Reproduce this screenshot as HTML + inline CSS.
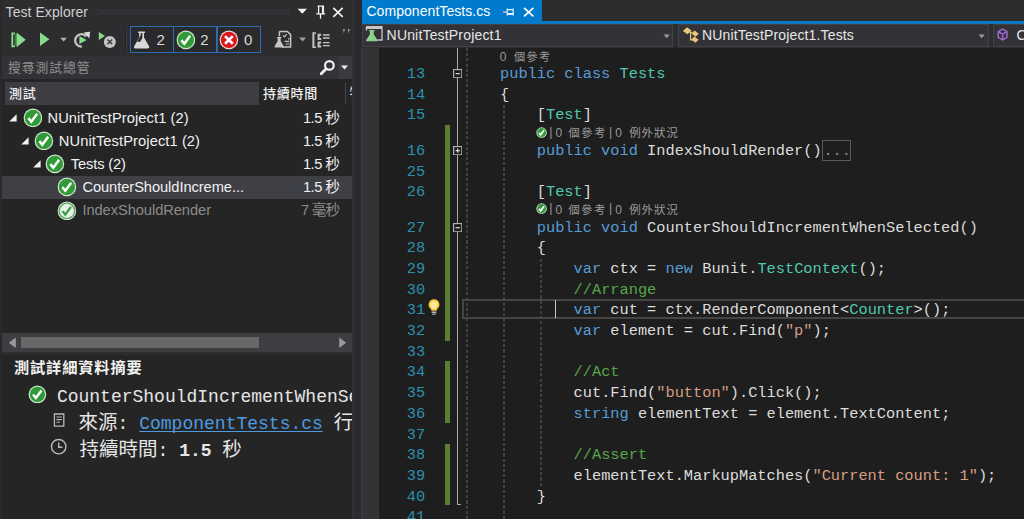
<!DOCTYPE html>
<html lang="zh-Hant"><head><meta charset="utf-8"><title>Test Explorer</title>
<style>
html,body{margin:0;padding:0}
body{width:1024px;height:519px;overflow:hidden;position:relative;background:#2d2d30;font-family:"Liberation Sans","Noto Sans CJK TC",sans-serif;}
.t{position:absolute;white-space:pre;margin:0}
.r{position:absolute;display:block}
.k{color:#569cd6} .y{color:#4ec9b0} .s{color:#d69d85} .c{color:#57a64a}
</style></head>
<body>
<div class="r" style="left:0.00px;top:0.00px;width:2.00px;height:519.00px;background:#2a2a2d;"></div>
<div class="t" id="title" style="top:2.65px;font-size:14px;line-height:19px;color:#cfcfcf;left:5.60px;letter-spacing:0.061px;">Test Explorer</div>
<svg class="r" style="left:97px;top:8.6px" width="194" height="6" viewBox="0 0 194 6"><defs><pattern id="gp" width="4" height="4" patternUnits="userSpaceOnUse"><rect x="0" y="0" width="1.3" height="1.3" fill="#46464b"/><rect x="2" y="2" width="1.3" height="1.3" fill="#46464b"/></pattern></defs><rect width="193" height="5.4" fill="url(#gp)"/></svg>
<svg class="r" style="left:296.00px;top:4.00px" width="50" height="16" viewBox="0 0 50 16"><path d="M1.6 4.8 L11 4.8 L6.3 9.8 Z" fill="#f1f1f1"/><path d="M21.6 2.2 h6.4 M22.6 2.2 v7.6 M26.6 2.2 v7.6 M27.4 2.2 v7.6 M20.2 9.8 h9 M24.5 9.8 v5" stroke="#f1f1f1" stroke-width="1.3" fill="none"/><path d="M37.3 3.8 L46.7 12.8 M46.7 3.8 L37.3 12.8" stroke="#f1f1f1" stroke-width="1.7" fill="none"/></svg>
<svg class="r" style="left:8.00px;top:28.00px" width="110" height="24" viewBox="0 0 110 24"><path d="M3.4 4.6 h3.6 v1.6 h-1.8 v11.4 h1.8 v1.6 h-3.6 Z" fill="#86dc88"/><path d="M6.6 5.2 L11 8.6 L11 15.2 L6.6 18.6 Z" fill="#4a7a4a"/><path d="M8.6 4.4 L17.8 11.8 L8.6 19.2 Z" fill="#86dc88"/><path d="M32 4.4 L41.4 11.2 L32 18 Z" fill="#86dc88"/><path d="M52.2 9.8 L59 9.8 L55.6 13.4 Z" fill="#b4b4b4"/><path d="M78.2 8.5 A6.2 6.2 0 1 0 73.9 18.6" stroke="#c5c5c5" stroke-width="2.2" fill="none"/><path d="M75.6 4.6 L82 3.8 L81.4 10.4 Z" fill="#dedede"/><path d="M71.4 8 L78.6 12 L71.4 16.1 Z" fill="#86dc88"/><path d="M90.8 4 L97 8 L90.8 12 Z" fill="#86dc88"/><circle cx="101.8" cy="13.9" r="6" fill="#c5c5c5"/><path d="M99.4 11.5 L104.2 16.3 M104.2 11.5 L99.4 16.3" stroke="#3c3c3c" stroke-width="1.5"/></svg>
<div class="r" style="left:125.30px;top:27.00px;width:1.00px;height:26.00px;background:#222224;"></div>
<div class="r" style="left:126.30px;top:27.00px;width:1.00px;height:26.00px;background:#3a3a3e;"></div>
<div class="r" style="left:130.00px;top:26.30px;width:131.00px;height:26.60px;background:#2a2a2c;box-sizing:border-box;border:1.3px solid #2c6cb5;"></div>
<div class="r" style="left:172.60px;top:26.30px;width:1.30px;height:26.60px;background:#2c6cb5;"></div>
<div class="r" style="left:216.40px;top:26.30px;width:1.30px;height:26.60px;background:#2c6cb5;"></div>
<svg class="r" style="left:132.40px;top:29.60px" width="19" height="20" viewBox="0 0 19 20"><path d="M6.2 1.4 h6.8 v1.6 h-1 v4.6 l5.2 9 q0.5 1.6 -1.2 1.8 h-12.8 q-1.7 -0.2 -1.2 -1.8 l5.2 -9 v-4.6 h-1 Z" fill="#d8d8d8"/><path d="M8.8 3 h1.6 v5 l-2.2 3.8 h-3.2 l3.8 -6.6 Z" fill="#2a2a2c"/></svg>
<div class="t" id="n1" style="top:30.00px;font-size:15px;line-height:20px;color:#d8d8d8;left:156.60px;">2</div>
<svg class="r" style="left:175.70px;top:29.80px" width="19.80" height="19.80" viewBox="-10 -10 20 20"><circle r="9.4" fill="#cfe8cf"/><circle r="8.2" fill="#2f9a37"/><path d="M-4.6 0.2 L-1.6 3.9 L4.3 -4.2" stroke="#ffffff" stroke-width="2.5" fill="none"/></svg>
<div class="t" id="n2" style="top:30.00px;font-size:15px;line-height:20px;color:#d8d8d8;left:200.20px;">2</div>
<svg class="r" style="left:218.8px;top:29.8px" width="19.8" height="19.8" viewBox="-10 -10 20 20"><circle r="9.4" fill="#f3d6d6"/><circle r="8.2" fill="#d8181c"/><path d="M-3.9 -3.9 L3.9 3.9 M3.9 -3.9 L-3.9 3.9" stroke="#fff" stroke-width="2.6"/></svg>
<div class="t" id="n3" style="top:30.00px;font-size:15px;line-height:20px;color:#d8d8d8;left:244.00px;">0</div>
<svg class="r" style="left:273.00px;top:29.00px" width="80" height="22" viewBox="0 0 80 22"><path d="M6.4 2.4 h8 l3.2 3.2 v12.4 h-8.6" stroke="#c5c5c5" stroke-width="1.5" fill="none"/><path d="M6.4 2.4 v5" stroke="#c5c5c5" stroke-width="1.5"/><path d="M10 6.4 l1.4 1.4 l2.4 -2.6 M15 9.8 h1.6 M11.6 12.4 h4.6 M12.6 15 h3.6" stroke="#c5c5c5" stroke-width="1.2" fill="none"/><path d="M4 8 h4.4 v1 h-0.7 v3 l3.2 5.4 q0.2 0.9 -0.7 1 h-8 q-0.9 -0.1 -0.7 -1 l3.2 -5.4 v-3 h-0.7 Z" fill="#c5c5c5"/><path d="M26 8.6 L33.2 8.6 L29.6 12.4 Z" fill="#9a9a9a"/><path d="M39.4 3.2 h3.6 v1.6 h-1.6 v12.6 h1.6 v1.6 h-3.6 Z" fill="#c5c5c5"/><path d="M44.6 4.8 h3.6 v2 h-1.6 v2.2 h1.6 v2 h-3.6 Z M44.6 12.4 h3.6 v2 h-1.6 v2.2 h1.6 v2 h-3.6 Z" fill="#c5c5c5"/><path d="M50 6 h6.6 M50 9 h6.6 M50 13.6 h6.6 M50 16.6 h6.6" stroke="#c5c5c5" stroke-width="1.4"/><path d="M69.8 0 l2.2 0 l-1.1 4.4 Z M74.6 0 l2.2 0 l-1.1 4.4 Z" fill="#9a9a9a"/></svg>
<div class="r" style="left:2.00px;top:56.20px;width:350.50px;height:22.50px;background:#333337;"></div>
<div class="r" style="left:2.00px;top:78.70px;width:350.50px;height:3.40px;background:#252526;"></div>
<div class="r" style="left:338.00px;top:56.20px;width:14.50px;height:22.50px;background:#3a3a3f;"></div>
<div class="t" id="search" style="top:59.06px;font-size:12.8px;line-height:17px;color:#8f8f8f;left:8.00px;letter-spacing:0.953px;">搜尋測試總管</div>
<svg class="r" style="left:318.00px;top:58.00px" width="34" height="19" viewBox="0 0 34 19"><circle cx="11.4" cy="7.4" r="4.3" stroke="#f1f1f1" stroke-width="2.2" fill="none"/><path d="M8.2 10.8 L3.2 15.8" stroke="#f1f1f1" stroke-width="2.8" stroke-linecap="round"/><path d="M23 7.6 L30 7.6 L26.5 11.4 Z" fill="#f1f1f1"/></svg>
<div class="r" style="left:2.00px;top:82.00px;width:350.50px;height:22.60px;background:#252526;"></div>
<div class="r" style="left:5.00px;top:82.00px;width:254.00px;height:22.60px;background:#3e3e42;"></div>
<div class="r" style="left:345.00px;top:83.00px;width:1.00px;height:21.00px;background:#45454a;"></div>
<div class="t" id="h1" style="top:85.30px;font-size:13.0px;line-height:18px;color:#f1f1f1;left:9.00px;font-weight:500;letter-spacing:0.742px;">測試</div>
<div class="t" id="h2" style="top:85.30px;font-size:13.0px;line-height:18px;color:#f1f1f1;left:263.00px;font-weight:500;letter-spacing:0.746px;">持續時間</div>
<div class="r" style="left:346px;top:82px;width:6.5px;height:22.6px;overflow:hidden"><div class="t" style="left:3.5px;top:1px;font-size:13.6px;line-height:20px;color:#f1f1f1">特徵</div></div>
<div class="r" style="left:2.00px;top:104.60px;width:350.50px;height:228.00px;background:#252526;"></div>
<div class="r" style="left:2.00px;top:176.00px;width:350.50px;height:23.00px;background:#3f3f46;"></div>
<svg class="r" style="left:9.40px;top:113.80px" width="8" height="8" viewBox="0 0 8 8"><path d="M7.6 0.2 L7.6 7.4 L0.2 7.4 Z" fill="#f1f1f1"/></svg>
<svg class="r" style="left:22.60px;top:107.60px" width="19.80" height="19.80" viewBox="-10 -10 20 20"><circle r="9.4" fill="#cfe8cf"/><circle r="8.2" fill="#2f9a37"/><path d="M-4.6 0.2 L-1.6 3.9 L4.3 -4.2" stroke="#ffffff" stroke-width="2.5" fill="none"/></svg>
<div class="t" id="r1" style="top:107.52px;font-size:14.67px;line-height:20px;color:#f1f1f1;left:47.50px;letter-spacing:0.096px;">NUnitTestProject1 (2)</div>
<div class="t" id="r1d" style="top:107.52px;font-size:14.67px;line-height:20px;color:#f1f1f1;right:684.50px;letter-spacing:-0.502px;">1.5 秒</div>
<svg class="r" style="left:21.20px;top:136.90px" width="8" height="8" viewBox="0 0 8 8"><path d="M7.6 0.2 L7.6 7.4 L0.2 7.4 Z" fill="#f1f1f1"/></svg>
<svg class="r" style="left:33.80px;top:130.70px" width="19.80" height="19.80" viewBox="-10 -10 20 20"><circle r="9.4" fill="#cfe8cf"/><circle r="8.2" fill="#2f9a37"/><path d="M-4.6 0.2 L-1.6 3.9 L4.3 -4.2" stroke="#ffffff" stroke-width="2.5" fill="none"/></svg>
<div class="t" id="r2" style="top:130.62px;font-size:14.67px;line-height:20px;color:#f1f1f1;left:58.80px;letter-spacing:0.096px;">NUnitTestProject1 (2)</div>
<div class="t" id="r2d" style="top:130.62px;font-size:14.67px;line-height:20px;color:#f1f1f1;right:684.50px;letter-spacing:-0.502px;">1.5 秒</div>
<svg class="r" style="left:32.50px;top:160.20px" width="8" height="8" viewBox="0 0 8 8"><path d="M7.6 0.2 L7.6 7.4 L0.2 7.4 Z" fill="#f1f1f1"/></svg>
<svg class="r" style="left:45.40px;top:154.00px" width="19.80" height="19.80" viewBox="-10 -10 20 20"><circle r="9.4" fill="#cfe8cf"/><circle r="8.2" fill="#2f9a37"/><path d="M-4.6 0.2 L-1.6 3.9 L4.3 -4.2" stroke="#ffffff" stroke-width="2.5" fill="none"/></svg>
<div class="t" id="r3" style="top:153.92px;font-size:14.67px;line-height:20px;color:#f1f1f1;left:70.80px;letter-spacing:-0.134px;">Tests (2)</div>
<div class="t" id="r3d" style="top:153.92px;font-size:14.67px;line-height:20px;color:#f1f1f1;right:684.50px;letter-spacing:-0.502px;">1.5 秒</div>
<svg class="r" style="left:56.90px;top:177.40px" width="19.80" height="19.80" viewBox="-10 -10 20 20"><circle r="9.4" fill="#cfe8cf"/><circle r="8.2" fill="#2f9a37"/><path d="M-4.6 0.2 L-1.6 3.9 L4.3 -4.2" stroke="#ffffff" stroke-width="2.5" fill="none"/></svg>
<div class="t" id="r4" style="top:177.32px;font-size:14.67px;line-height:20px;color:#f1f1f1;left:82.40px;letter-spacing:-0.058px;">CounterShouldIncreme...</div>
<div class="t" id="r4d" style="top:177.32px;font-size:14.67px;line-height:20px;color:#f1f1f1;right:684.50px;letter-spacing:-0.502px;">1.5 秒</div>
<svg class="r" style="left:56.90px;top:200.50px" width="19.80" height="19.80" viewBox="-10 -10 20 20"><circle r="9.4" fill="#d5e6d5"/><circle r="8.5" fill="#5aa95c"/><circle r="7.1" fill="#e8f0e8"/><path d="M-4.4 0.2 L-1.6 3.7 L4.1 -4.0" stroke="#3b9a3d" stroke-width="2.3" fill="none"/></svg>
<div class="t" id="r5" style="top:200.42px;font-size:14.67px;line-height:20px;color:#8c8c8c;left:82.40px;letter-spacing:-0.057px;">IndexShouldRender</div>
<div class="t" id="r5d" style="top:200.42px;font-size:14.67px;line-height:20px;color:#8c8c8c;right:684.50px;letter-spacing:-0.737px;">7 毫秒</div>
<div class="r" style="left:2.00px;top:333.00px;width:350.50px;height:19.20px;background:#3e3e42;"></div>
<div class="r" style="left:21.40px;top:337.40px;width:237.60px;height:10.20px;background:#686868;"></div>
<svg class="r" style="left:7.00px;top:336.00px" width="12" height="14" viewBox="0 0 12 14"><path d="M8.8 1.6 L8.8 12 L1.8 6.8 Z" fill="#999999"/></svg>
<svg class="r" style="left:336.00px;top:336.00px" width="12" height="14" viewBox="0 0 12 14"><path d="M3.2 1.6 L3.2 12 L10.2 6.8 Z" fill="#999999"/></svg>
<div class="r" style="left:2.00px;top:355.00px;width:350.50px;height:166.00px;background:#252526;"></div>
<div class="t" id="sumt" style="top:356.63px;font-size:15.2px;line-height:21px;color:#f1f1f1;left:13.90px;font-weight:bold;letter-spacing:0.900px;">測試詳細資料摘要</div>
<svg class="r" style="left:27.80px;top:384.60px" width="18.80" height="18.80" viewBox="-10 -10 20 20"><circle r="9.4" fill="#cfe8cf"/><circle r="8.2" fill="#2f9a37"/><path d="M-4.6 0.2 L-1.6 3.9 L4.3 -4.2" stroke="#ffffff" stroke-width="2.5" fill="none"/></svg>
<div class="t" id="s1" style="top:385.20px;font-size:18px;line-height:24px;color:#e6e6e6;left:56.90px;font-family:'Liberation Mono','Noto Sans CJK TC',monospace;max-width:295.6px;overflow:hidden;">CounterShouldIncrementWhenSelected</div>
<div class="t" id="s2" style="top:411.80px;font-size:18px;line-height:24px;color:#e6e6e6;left:78.60px;font-family:'Liberation Mono','Noto Sans CJK TC',monospace;max-width:273.9px;overflow:hidden;"><span style="font-size:19.5px">來源</span>: <span style="color:#4e9ae0;text-decoration:underline;text-underline-offset:2.4px;text-decoration-skip-ink:none">ComponentTests.cs</span> <span style="font-size:19.5px">行</span> 31</div>
<div class="t" id="s3" style="top:438.60px;font-size:18px;line-height:24px;color:#e6e6e6;left:79.50px;font-family:'Liberation Mono','Noto Sans CJK TC',monospace;max-width:273.0px;overflow:hidden;"><span style="font-size:19.5px">持續時間</span>: <b>1.5</b> <span style="font-size:19.5px">秒</span></div>
<svg class="r" style="left:52.00px;top:412.00px" width="14" height="16" viewBox="0 0 14 16"><path d="M2.4 2 h9.4 v12.2 h-9.4 Z" stroke="#b8b8b8" stroke-width="1.3" fill="none"/><path d="M4.4 5 h5.4 M4.4 7.6 h5.4 M4.4 10.2 h3.4" stroke="#b8b8b8" stroke-width="1.1"/></svg>
<svg class="r" style="left:50.00px;top:438.30px" width="18" height="18" viewBox="0 0 18 18"><circle cx="8.7" cy="8.7" r="7.2" stroke="#b8b8b8" stroke-width="1.4" fill="none"/><path d="M8.7 4.4 V9.2 H12.4" stroke="#b8b8b8" stroke-width="1.4" fill="none"/></svg>
<div class="r" style="left:352.00px;top:0.00px;width:1.60px;height:519.00px;background:#323236;"></div>
<div class="r" style="left:353.50px;top:0.00px;width:8.00px;height:519.00px;background:#2b2b2f;"></div>
<div class="r" style="left:362.00px;top:0.00px;width:179.50px;height:22.00px;background:#007acc;"></div>
<div class="t" id="tab" style="top:1.85px;font-size:14px;line-height:19px;color:#ffffff;left:366.40px;letter-spacing:0.062px;">ComponentTests.cs</div>
<svg class="r" style="left:500.00px;top:4.00px" width="38" height="16" viewBox="0 0 38 16"><path d="M3 8 h4.2 M7.2 4.6 v6.8 M7.2 5.6 h6 M7.2 9.6 h6 M7.2 10.4 h6 M13.2 4.4 v7.2" stroke="#e6f3ff" stroke-width="1.2" fill="none"/><path d="M24 3.8 L33.4 12.4 M33.4 3.8 L24 12.4" stroke="#ffffff" stroke-width="1.7" fill="none"/></svg>
<div class="r" style="left:362.00px;top:21.00px;width:662.00px;height:2.60px;background:#0a78c4;"></div>
<div class="r" style="left:362.00px;top:23.60px;width:662.00px;height:24.00px;background:#2d2d30;"></div>
<div class="r" style="left:362.00px;top:24.40px;width:311.40px;height:22.40px;background:#333337;box-sizing:border-box;border:1px solid #434346;"></div>
<div class="r" style="left:677.60px;top:24.40px;width:311.40px;height:22.40px;background:#333337;box-sizing:border-box;border:1px solid #434346;"></div>
<div class="r" style="left:993.40px;top:24.40px;width:40.00px;height:22.40px;background:#333337;box-sizing:border-box;border:1px solid #434346;"></div>
<svg class="r" style="left:364.00px;top:25.00px" width="20" height="18" viewBox="0 0 20 18"><path d="M2.4 1.6 h15.6 v13.4 h-4.6" stroke="#c8c8c8" stroke-width="1.3" fill="none"/><path d="M2.4 1.6 h15.6 v2.4 h-15.6 Z" fill="#c8c8c8"/><path d="M2.4 1.6 v4" stroke="#c8c8c8" stroke-width="1.3"/><path d="M5 5 h5.6 v1.2 h-0.9 v3 l3.8 6 q0.3 1 -0.8 1.1 h-9.8 q-1.1 -0.1 -0.8 -1.1 l3.8 -6 v-3 h-0.9 Z" fill="#8dd28a"/></svg>
<div class="t" id="nav1" style="top:26.25px;font-size:14px;line-height:19px;color:#e6e6e6;left:386.60px;letter-spacing:0.174px;">NUnitTestProject1</div>
<svg class="r" style="left:662.00px;top:31.70px" width="10" height="8" viewBox="0 0 10 8"><path d="M1.6 2.6 L7.8 2.6 L4.7 6.2 Z" fill="#999999"/></svg>
<svg class="r" style="left:682.00px;top:26.00px" width="18" height="18" viewBox="0 0 18 18"><path d="M5 1.2 L9.6 4.4 L5.4 8.2 L0.8 5 Z" fill="#e8c77a"/><path d="M12.6 4.6 L16.8 7.8 L13.6 10.8 L9.4 7.6 Z" fill="#e8c77a"/><path d="M12.4 10.6 L16.6 13.8 L13.4 16.8 L9.2 13.6 Z" fill="#e8c77a"/><path d="M7.6 6.4 h2.4 M8.6 6.4 v7.4 h2" stroke="#e8c77a" stroke-width="1.2" fill="none"/></svg>
<div class="t" id="nav2" style="top:26.25px;font-size:14px;line-height:19px;color:#e6e6e6;left:702.00px;letter-spacing:0.147px;">NUnitTestProject1.Tests</div>
<svg class="r" style="left:977.00px;top:31.70px" width="10" height="8" viewBox="0 0 10 8"><path d="M1.6 2.6 L7.8 2.6 L4.7 6.2 Z" fill="#999999"/></svg>
<svg class="r" style="left:997.00px;top:28.00px" width="12" height="14" viewBox="0 0 12 14"><path d="M5.6 1.2 L10 3.6 V9.4 L5.6 12 L1.2 9.4 V3.6 Z M1.2 3.6 L5.6 6.2 L10 3.6 M5.6 6.2 V12" stroke="#9b6ad0" stroke-width="1.5" fill="none"/></svg>
<div class="t" id="nav3" style="top:26.25px;font-size:14px;line-height:19px;color:#e6e6e6;left:1016.60px;">CounterShouldIncrementWhenSelected()</div>
<div class="r" style="left:362.00px;top:47.60px;width:17.00px;height:471.40px;background:#333333;"></div>
<div class="r" style="left:361.00px;top:47.60px;width:1.60px;height:471.40px;background:#3a3a3e;"></div>
<div class="r" style="left:379.00px;top:47.60px;width:645.00px;height:471.40px;background:#1e1e1e;"></div>
<div class="r" style="left:445.00px;top:124.60px;width:5.00px;height:216.00px;background:#5b7e33;"></div>
<div class="r" style="left:445.00px;top:361.20px;width:5.00px;height:62.00px;background:#5b7e33;"></div>
<div class="r" style="left:445.00px;top:443.80px;width:5.00px;height:61.20px;background:#5b7e33;"></div>
<div class="r" style="left:457.00px;top:47.60px;width:1.20px;height:457.40px;background:#a8a8a8;"></div>
<div class="r" style="left:457.00px;top:504.20px;width:4.40px;height:1.20px;background:#a8a8a8;"></div>
<div class="r" style="left:466px;top:47.60px;width:2px;height:471.40px;background:repeating-linear-gradient(to bottom,#424242 0,#424242 3.1px,transparent 3.1px,transparent 5.2px)"></div>
<div class="r" style="left:503px;top:104.60px;width:2px;height:414.40px;background:repeating-linear-gradient(to bottom,#424242 0,#424242 3.1px,transparent 3.1px,transparent 5.2px)"></div>
<div class="r" style="left:540px;top:258.60px;width:2px;height:227.00px;background:repeating-linear-gradient(to bottom,#424242 0,#424242 3.1px,transparent 3.1px,transparent 5.2px)"></div>
<div class="r" style="left:462.00px;top:299.00px;width:566.00px;height:20.00px;background:transparent;box-sizing:border-box;border:2px solid #454545;"></div>
<div class="r" style="left:555.00px;top:300.00px;width:1.40px;height:18.40px;background:#c8c8c8;"></div>
<div class="t" id="ln13" style="top:64.02px;font-size:15.325px;line-height:21px;color:#2b91af;right:598.80px;font-family:'Liberation Mono','Noto Sans CJK TC',monospace;">13</div>
<div class="t" id="c13" style="top:64.02px;font-size:15.325px;line-height:21px;color:#dcdcdc;left:500.00px;font-family:'Liberation Mono','Noto Sans CJK TC',monospace;"><span class="k">public</span> <span class="k">class</span> <span class="y">Tests</span></div>
<div class="t" id="ln14" style="top:84.70px;font-size:15.325px;line-height:21px;color:#2b91af;right:598.80px;font-family:'Liberation Mono','Noto Sans CJK TC',monospace;">14</div>
<div class="t" id="c14" style="top:84.70px;font-size:15.325px;line-height:21px;color:#dcdcdc;left:500.00px;font-family:'Liberation Mono','Noto Sans CJK TC',monospace;">{</div>
<div class="t" id="ln15" style="top:105.38px;font-size:15.325px;line-height:21px;color:#2b91af;right:598.80px;font-family:'Liberation Mono','Noto Sans CJK TC',monospace;">15</div>
<div class="t" id="c15" style="top:105.38px;font-size:15.325px;line-height:21px;color:#dcdcdc;left:536.78px;font-family:'Liberation Mono','Noto Sans CJK TC',monospace;">[<span class="y">Test</span>]</div>
<div class="t" id="ln16" style="top:140.86px;font-size:15.325px;line-height:21px;color:#2b91af;right:598.80px;font-family:'Liberation Mono','Noto Sans CJK TC',monospace;">16</div>
<div class="t" id="c16" style="top:140.86px;font-size:15.325px;line-height:21px;color:#dcdcdc;left:536.78px;font-family:'Liberation Mono','Noto Sans CJK TC',monospace;"><span class="k">public</span> <span class="k">void</span> IndexShouldRender()</div>
<div class="t" id="ln25" style="top:161.54px;font-size:15.325px;line-height:21px;color:#2b91af;right:598.80px;font-family:'Liberation Mono','Noto Sans CJK TC',monospace;">25</div>
<div class="t" id="ln26" style="top:182.22px;font-size:15.325px;line-height:21px;color:#2b91af;right:598.80px;font-family:'Liberation Mono','Noto Sans CJK TC',monospace;">26</div>
<div class="t" id="c26" style="top:182.22px;font-size:15.325px;line-height:21px;color:#dcdcdc;left:536.78px;font-family:'Liberation Mono','Noto Sans CJK TC',monospace;">[<span class="y">Test</span>]</div>
<div class="t" id="ln27" style="top:217.70px;font-size:15.325px;line-height:21px;color:#2b91af;right:598.80px;font-family:'Liberation Mono','Noto Sans CJK TC',monospace;">27</div>
<div class="t" id="c27" style="top:217.70px;font-size:15.325px;line-height:21px;color:#dcdcdc;left:536.78px;font-family:'Liberation Mono','Noto Sans CJK TC',monospace;"><span class="k">public</span> <span class="k">void</span> CounterShouldIncrementWhenSelected()</div>
<div class="t" id="ln28" style="top:238.38px;font-size:15.325px;line-height:21px;color:#2b91af;right:598.80px;font-family:'Liberation Mono','Noto Sans CJK TC',monospace;">28</div>
<div class="t" id="c28" style="top:238.38px;font-size:15.325px;line-height:21px;color:#dcdcdc;left:536.78px;font-family:'Liberation Mono','Noto Sans CJK TC',monospace;">{</div>
<div class="t" id="ln29" style="top:259.06px;font-size:15.325px;line-height:21px;color:#2b91af;right:598.80px;font-family:'Liberation Mono','Noto Sans CJK TC',monospace;">29</div>
<div class="t" id="c29" style="top:259.06px;font-size:15.325px;line-height:21px;color:#dcdcdc;left:573.57px;font-family:'Liberation Mono','Noto Sans CJK TC',monospace;"><span class="k">var</span> ctx = <span class="k">new</span> Bunit.<span class="y">TestContext</span>();</div>
<div class="t" id="ln30" style="top:279.74px;font-size:15.325px;line-height:21px;color:#2b91af;right:598.80px;font-family:'Liberation Mono','Noto Sans CJK TC',monospace;">30</div>
<div class="t" id="c30" style="top:279.74px;font-size:15.325px;line-height:21px;color:#dcdcdc;left:573.57px;font-family:'Liberation Mono','Noto Sans CJK TC',monospace;"><span class="c">//Arrange</span></div>
<div class="t" id="ln31" style="top:300.42px;font-size:15.325px;line-height:21px;color:#2b91af;right:598.80px;font-family:'Liberation Mono','Noto Sans CJK TC',monospace;">31</div>
<div class="t" id="c31" style="top:300.42px;font-size:15.325px;line-height:21px;color:#dcdcdc;left:573.57px;font-family:'Liberation Mono','Noto Sans CJK TC',monospace;"><span class="k">var</span> cut = ctx.RenderComponent&lt;<span class="y">Counter</span>&gt;();</div>
<div class="t" id="ln32" style="top:321.10px;font-size:15.325px;line-height:21px;color:#2b91af;right:598.80px;font-family:'Liberation Mono','Noto Sans CJK TC',monospace;">32</div>
<div class="t" id="c32" style="top:321.10px;font-size:15.325px;line-height:21px;color:#dcdcdc;left:573.57px;font-family:'Liberation Mono','Noto Sans CJK TC',monospace;"><span class="k">var</span> element = cut.Find(<span class="s">&quot;p&quot;</span>);</div>
<div class="t" id="ln33" style="top:341.78px;font-size:15.325px;line-height:21px;color:#2b91af;right:598.80px;font-family:'Liberation Mono','Noto Sans CJK TC',monospace;">33</div>
<div class="t" id="ln34" style="top:362.46px;font-size:15.325px;line-height:21px;color:#2b91af;right:598.80px;font-family:'Liberation Mono','Noto Sans CJK TC',monospace;">34</div>
<div class="t" id="c34" style="top:362.46px;font-size:15.325px;line-height:21px;color:#dcdcdc;left:573.57px;font-family:'Liberation Mono','Noto Sans CJK TC',monospace;"><span class="c">//Act</span></div>
<div class="t" id="ln35" style="top:383.14px;font-size:15.325px;line-height:21px;color:#2b91af;right:598.80px;font-family:'Liberation Mono','Noto Sans CJK TC',monospace;">35</div>
<div class="t" id="c35" style="top:383.14px;font-size:15.325px;line-height:21px;color:#dcdcdc;left:573.57px;font-family:'Liberation Mono','Noto Sans CJK TC',monospace;">cut.Find(<span class="s">&quot;button&quot;</span>).Click();</div>
<div class="t" id="ln36" style="top:403.82px;font-size:15.325px;line-height:21px;color:#2b91af;right:598.80px;font-family:'Liberation Mono','Noto Sans CJK TC',monospace;">36</div>
<div class="t" id="c36" style="top:403.82px;font-size:15.325px;line-height:21px;color:#dcdcdc;left:573.57px;font-family:'Liberation Mono','Noto Sans CJK TC',monospace;"><span class="k">string</span> elementText = element.TextContent;</div>
<div class="t" id="ln37" style="top:424.50px;font-size:15.325px;line-height:21px;color:#2b91af;right:598.80px;font-family:'Liberation Mono','Noto Sans CJK TC',monospace;">37</div>
<div class="t" id="ln38" style="top:445.18px;font-size:15.325px;line-height:21px;color:#2b91af;right:598.80px;font-family:'Liberation Mono','Noto Sans CJK TC',monospace;">38</div>
<div class="t" id="c38" style="top:445.18px;font-size:15.325px;line-height:21px;color:#dcdcdc;left:573.57px;font-family:'Liberation Mono','Noto Sans CJK TC',monospace;"><span class="c">//Assert</span></div>
<div class="t" id="ln39" style="top:465.86px;font-size:15.325px;line-height:21px;color:#2b91af;right:598.80px;font-family:'Liberation Mono','Noto Sans CJK TC',monospace;">39</div>
<div class="t" id="c39" style="top:465.86px;font-size:15.325px;line-height:21px;color:#dcdcdc;left:573.57px;font-family:'Liberation Mono','Noto Sans CJK TC',monospace;">elementText.MarkupMatches(<span class="s">&quot;Current count: 1&quot;</span>);</div>
<div class="t" id="ln40" style="top:486.54px;font-size:15.325px;line-height:21px;color:#2b91af;right:598.80px;font-family:'Liberation Mono','Noto Sans CJK TC',monospace;">40</div>
<div class="t" id="c40" style="top:486.54px;font-size:15.325px;line-height:21px;color:#dcdcdc;left:536.78px;font-family:'Liberation Mono','Noto Sans CJK TC',monospace;">}</div>
<div class="t" id="ln41" style="top:507.22px;font-size:15.325px;line-height:21px;color:#2b91af;right:598.80px;font-family:'Liberation Mono','Noto Sans CJK TC',monospace;">41</div>
<div class="r" style="left:822.00px;top:140.40px;width:29.40px;height:20.40px;background:transparent;box-sizing:border-box;border:1.2px solid #5a5a5a;"></div>
<div class="t" id="ell" style="top:140.86px;font-size:15.325px;line-height:21px;color:#8a8a8a;left:823.40px;font-family:'Liberation Mono','Noto Sans CJK TC',monospace;">...</div>
<svg class="r" style="left:452.7px;top:68.90px" width="9.4" height="9.4" viewBox="0 0 9.6 9.6"><rect x="0.6" y="0.6" width="8.4" height="8.4" fill="#1e1e1e" stroke="#b8b8b8" stroke-width="1.1"/><path d="M2.6 4.8 H7" stroke="#e0e0e0" stroke-width="1.2"/></svg>
<svg class="r" style="left:452.7px;top:145.74px" width="9.4" height="9.4" viewBox="0 0 9.6 9.6"><rect x="0.6" y="0.6" width="8.4" height="8.4" fill="#1e1e1e" stroke="#b8b8b8" stroke-width="1.1"/><path d="M2.6 4.8 H7" stroke="#e0e0e0" stroke-width="1.2"/><path d="M4.8 2.6 V7" stroke="#e0e0e0" stroke-width="1.2"/></svg>
<svg class="r" style="left:452.7px;top:222.58px" width="9.4" height="9.4" viewBox="0 0 9.6 9.6"><rect x="0.6" y="0.6" width="8.4" height="8.4" fill="#1e1e1e" stroke="#b8b8b8" stroke-width="1.1"/><path d="M2.6 4.8 H7" stroke="#e0e0e0" stroke-width="1.2"/></svg>
<div class="t" id="cl0a" style="top:48.84px;font-size:12px;line-height:16px;color:#999999;left:499.80px;">0</div>
<div class="t" id="cl0b" style="top:49.02px;font-size:11.5px;line-height:16px;color:#999999;left:513.80px;letter-spacing:1.033px;">個參考</div>
<svg class="r" style="left:536.0px;top:126.60px" width="11.2" height="11.2" viewBox="-10 -10 20 20"><circle r="9.4" fill="#cfe6cf"/><circle r="8" fill="#2f9a37"/><path d="M-4.6 0.2 L-1.6 3.9 L4.3 -4.2" stroke="#fff" stroke-width="3" fill="none"/></svg>
<div class="t" id="clAp" style="top:123.50px;font-size:12.4px;line-height:17px;color:#999999;left:549.30px;">|</div>
<div class="t" id="clAa" style="top:124.74px;font-size:12px;line-height:16px;color:#999999;left:555.40px;">0</div>
<div class="t" id="clAb" style="top:125.12px;font-size:11.5px;line-height:16px;color:#999999;left:568.20px;letter-spacing:1.367px;">個參考</div>
<div class="t" id="clAq" style="top:123.50px;font-size:12.4px;line-height:17px;color:#999999;left:609.00px;">|</div>
<div class="t" id="clAc" style="top:124.74px;font-size:12px;line-height:16px;color:#999999;left:615.20px;">0</div>
<div class="t" id="clAd" style="top:125.12px;font-size:11.5px;line-height:16px;color:#999999;left:629.20px;letter-spacing:0.850px;">例外狀況</div>
<svg class="r" style="left:536.0px;top:203.40px" width="11.2" height="11.2" viewBox="-10 -10 20 20"><circle r="9.4" fill="#cfe6cf"/><circle r="8" fill="#2f9a37"/><path d="M-4.6 0.2 L-1.6 3.9 L4.3 -4.2" stroke="#fff" stroke-width="3" fill="none"/></svg>
<div class="t" id="clBp" style="top:200.30px;font-size:12.4px;line-height:17px;color:#999999;left:549.30px;">|</div>
<div class="t" id="clBa" style="top:201.54px;font-size:12px;line-height:16px;color:#999999;left:555.40px;">0</div>
<div class="t" id="clBb" style="top:201.92px;font-size:11.5px;line-height:16px;color:#999999;left:568.20px;letter-spacing:1.367px;">個參考</div>
<div class="t" id="clBq" style="top:200.30px;font-size:12.4px;line-height:17px;color:#999999;left:609.00px;">|</div>
<div class="t" id="clBc" style="top:201.54px;font-size:12px;line-height:16px;color:#999999;left:615.20px;">0</div>
<div class="t" id="clBd" style="top:201.92px;font-size:11.5px;line-height:16px;color:#999999;left:629.20px;letter-spacing:0.850px;">例外狀況</div>
<svg class="r" style="left:427.00px;top:298.00px" width="14" height="18" viewBox="0 0 14 18"><path d="M7 1.2 a5.4 5.4 0 0 1 3.4 9.6 q-0.8 0.8 -0.8 2 h-5.2 q0 -1.2 -0.8 -2 A5.4 5.4 0 0 1 7 1.2 Z" fill="#f2cb3d"/><path d="M7 3 a3.6 3.6 0 0 1 2.2 6.4 q-0.6 0.6 -0.8 1.6 h-2.8 q-0.2 -1 -0.8 -1.6 A3.6 3.6 0 0 1 7 3 Z" fill="#fbe89a"/><path d="M4.6 13.6 h4.8 v1.4 h-4.8 Z M5.2 15.6 h3.6 v1.2 h-3.6 Z" fill="#b0b0b0"/></svg>
</body></html>
